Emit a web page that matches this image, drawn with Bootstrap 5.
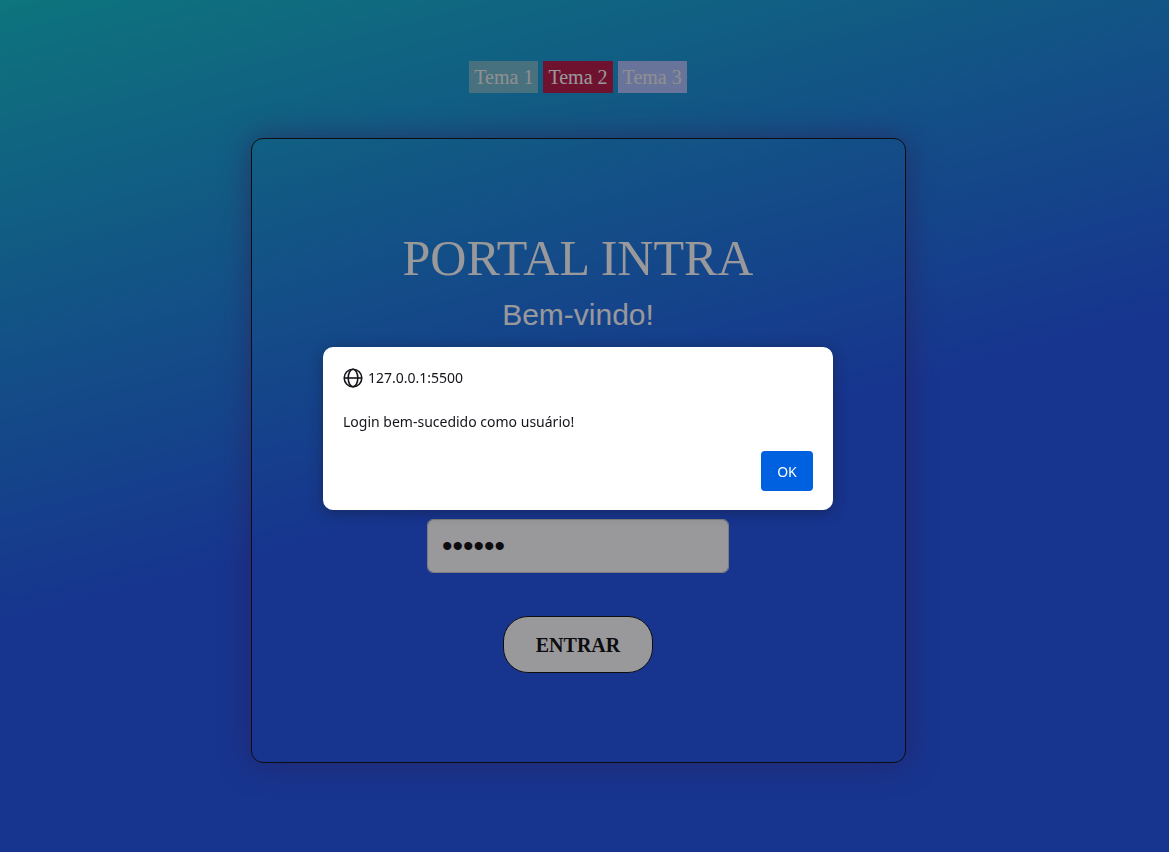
<!DOCTYPE html>
<html lang="pt-br">
<head>
<meta charset="utf-8">
<meta name="viewport" content="width=device-width, initial-scale=1">
<title>Portal Intra</title>
<link href="https://cdn.jsdelivr.net/npm/bootstrap@5.3.0/dist/css/bootstrap.min.css" rel="stylesheet">
<style>
  body {
    font-family: "Liberation Serif", "Times New Roman", serif;
    background: linear-gradient(165deg, #02bec8 0%, #134ae8 54%) no-repeat;
    min-height: 100vh;
    padding-right: 13px;
  }
  .theme-list { padding-top: 61px; gap: 5px; margin-bottom: 45px; }
  .theme-btn {
    border: 0; border-radius: 0; color: #fff;
    font-size: 20px; line-height: 24px; padding: 4px 5px;
  }
  .theme-1 { background: #6ab8cb; color: #eee; }
  .theme-2 { background: #b10b3d; }
  .theme-3 { background: #a8befe; color: #eee; }
  .login-box {
    width: 100%; max-width: 655px; min-height: 625px;
    border: 1px solid #000; border-radius: 12px;
    box-shadow: 0 0 30px rgba(60, 30, 130, .62);
    padding: 89px 24px; color: #fff;
  }
  .login-box h1 { font-size: 50px; line-height: 60px; font-weight: 400; margin: 0 0 8px; }
  .login-box h2 {
    font-family: "Liberation Sans", Arial, sans-serif;
    font-size: 30px; line-height: 38px; font-weight: 400; margin: 0 0 107px;
  }
  .login-field {
    width: 302px; height: 54px; padding: 0 14px; margin-bottom: 24px;
    border: 1px solid #ccc; border-radius: 6px; color: #000; font-size: 20px;
    font-family: "Liberation Sans", Arial, sans-serif;
  }
  .login-field[type="password"] { font-size: 30px; margin-bottom: 43px; }
  .enter-btn {
    width: 150px; height: 57px; border: 1px solid #000; border-radius: 25px;
    background: #fff; color: #000; font-size: 20px; font-weight: 700; padding: 0;
  }
  .dim-layer { background: rgba(28, 27, 34, .45); z-index: 1040; }
  .alert-layer { padding: 5px 13px 0 0; font-family: "Noto Sans", "Open Sans", sans-serif; }
  .alert-layer .modal-dialog { max-width: 510px; margin: 0 auto; min-height: 100%; }
  .alert-layer .modal-content {
    border: 0; border-radius: 10px; padding: 19px 20px;
    color: #15141a; font-size: 14px; line-height: 24px;
    box-shadow: 0 2px 14px rgba(21, 20, 26, .4);
  }
  .origin-row { gap: 5px; margin-bottom: 20px; }
  .alert-actions { margin-top: 17px; }
  .ok-btn {
    width: 52px; height: 40px; padding: 0; border: 0; border-radius: 4px;
    background: #0061e0; color: #fff; font-size: 14px;
  }
</style>
</head>
<body>
<nav class="theme-list d-flex justify-content-center" aria-label="Temas">
  <button type="button" class="btn theme-btn theme-1">Tema 1</button>
  <button type="button" class="btn theme-btn theme-2">Tema 2</button>
  <button type="button" class="btn theme-btn theme-3">Tema 3</button>
</nav>
<main class="d-flex justify-content-center">
  <form class="login-box d-flex flex-column align-items-center text-center">
    <h1>PORTAL INTRA</h1>
    <h2>Bem-vindo!</h2>
    <input type="text" class="form-control login-field" aria-label="Usuário">
    <input type="password" class="form-control login-field" aria-label="Senha" value="123456">
    <button type="submit" class="btn enter-btn">ENTRAR</button>
  </form>
</main>
<div class="dim-layer position-fixed top-0 start-0 w-100 h-100"></div>
<div class="modal alert-layer d-block" role="dialog" aria-modal="true" aria-describedby="alertText">
  <div class="modal-dialog d-flex align-items-center">
    <div class="modal-content">
      <div class="origin-row d-flex align-items-center">
        <svg width="20" height="20" viewBox="0 0 20 20" fill="none" stroke="currentColor" stroke-width="1.6" aria-hidden="true">
          <circle cx="10" cy="10" r="8.8"/>
          <ellipse cx="10" cy="10" rx="4.8" ry="8.8"/>
          <path d="M1.2 10H18.8"/>
        </svg>
        <span>127.0.0.1:5500</span>
      </div>
      <div id="alertText">Login bem-sucedido como usuário!</div>
      <div class="alert-actions d-flex justify-content-end">
        <button type="button" class="btn ok-btn">OK</button>
      </div>
    </div>
  </div>
</div>
<script src="https://cdn.jsdelivr.net/npm/bootstrap@5.3.0/dist/js/bootstrap.bundle.min.js"></script>
</body>
</html>
